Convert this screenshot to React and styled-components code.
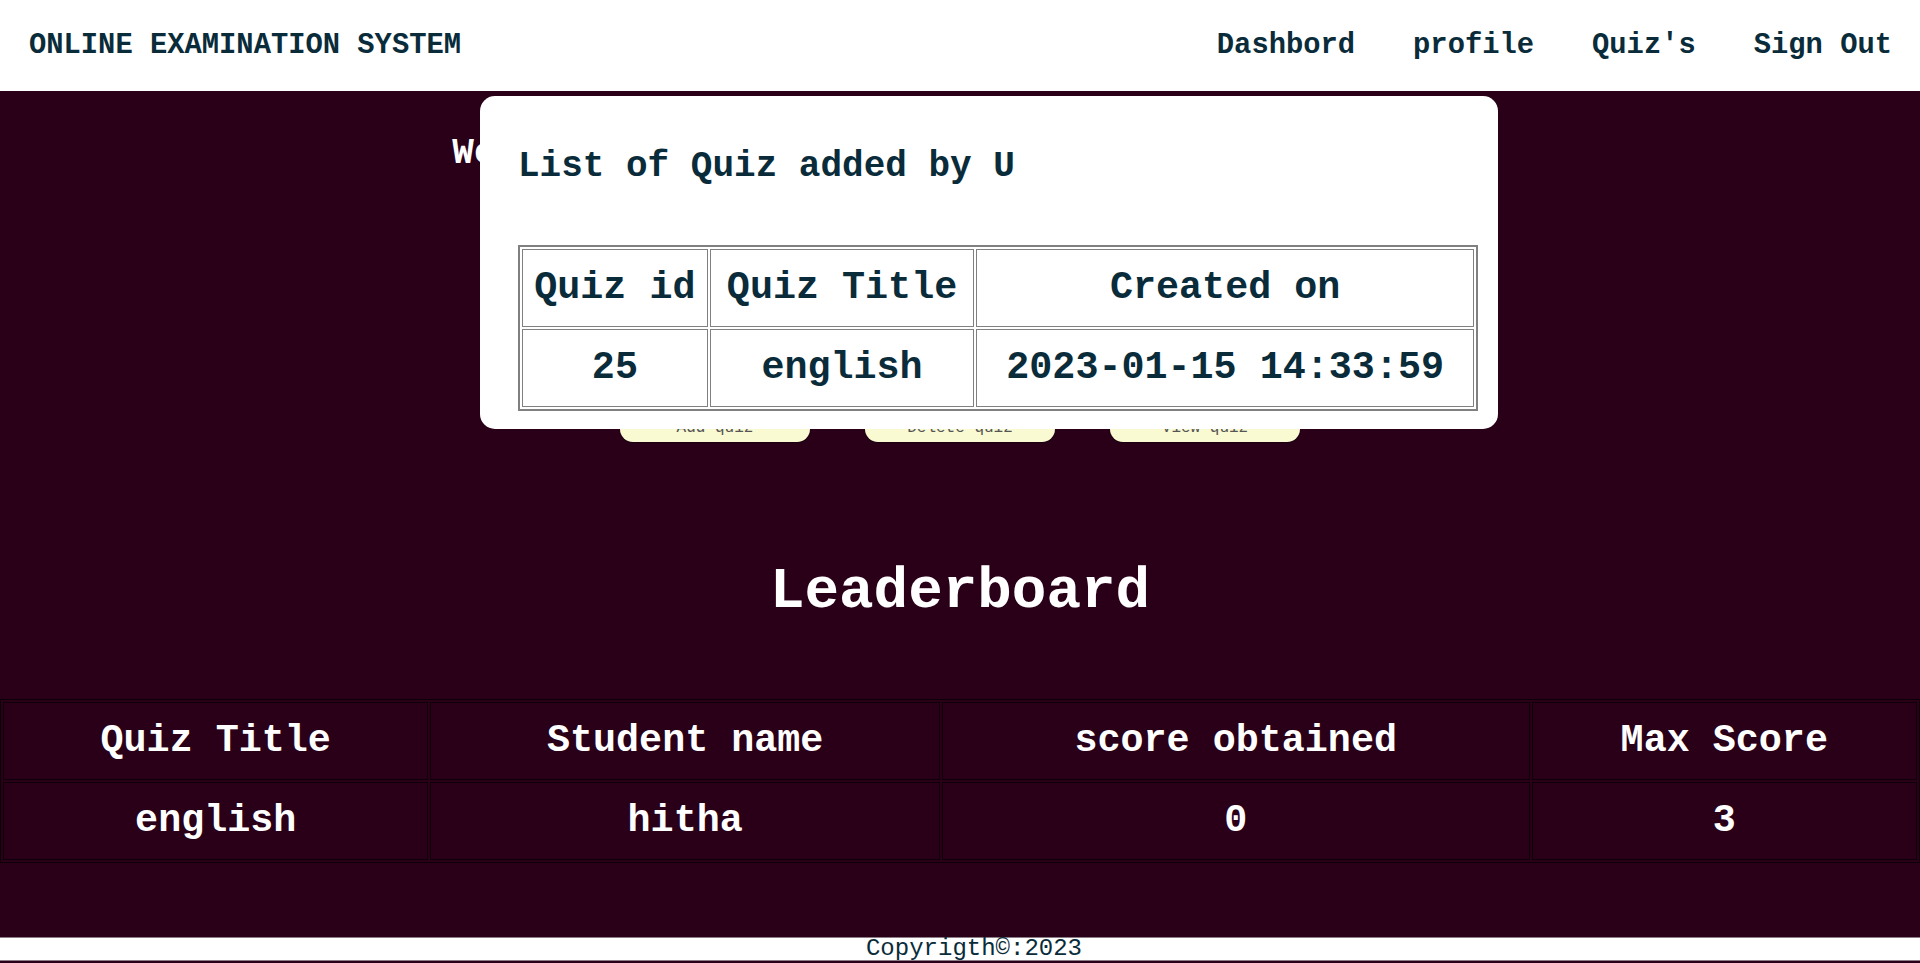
import React from "react";
import styled, { createGlobalStyle } from "styled-components";

const ink = "#0a2c3a";
const wine = "#2a0019";
const mono = `"Courier New", "Nimbus Mono PS", "Liberation Mono", monospace`;

const GlobalStyle = createGlobalStyle`
  body {
    margin: 0;
    background: ${wine};
    font-family: ${mono};
  }
`;

const Header = styled.header`
  height: 91px;
  background: #fff;
  display: flex;
  align-items: center;
  justify-content: space-between;
  padding: 0 28px 0 29px;
  box-sizing: border-box;
`;

const Brand = styled.div`
  font-size: 28.8px;
  font-weight: bold;
  color: ${ink};
`;

const Nav = styled.nav`
  display: flex;
  gap: 58px;
`;

const NavLink = styled.a`
  font-size: 28.8px;
  font-weight: bold;
  color: ${ink};
  text-decoration: none;
`;

const Main = styled.main`
  padding-top: 42px;
  display: flex;
  flex-direction: column;
  align-items: center;
`;

const Welcome = styled.h2`
  margin: 0;
  font-size: 36px;
  font-weight: bold;
  color: #fff;
  text-align: center;
`;

const Actions = styled.div`
  display: flex;
  gap: 55px;
  margin-top: 232px;
`;

const ActionButton = styled.button`
  width: 190px;
  padding: 13px 0 5px;
  border: none;
  border-radius: 13px;
  background: #fafad2;
  box-shadow: 0 1px 2px rgba(0, 0, 0, 0.45);
  font-family: ${mono};
  font-size: 16px;
  line-height: 18px;
  color: #555;
`;

const BoardTitle = styled.h1`
  margin: 117px 0 75px;
  font-size: 57.6px;
  font-weight: bold;
  color: #fff;
`;

const Table = styled.table`
  width: ${(p) => p.$width};
  table-layout: fixed;
  border-collapse: separate;
  border-spacing: 2px;
  border: 1px solid ${(p) => p.$line};
  color: ${(p) => p.$color};
`;

const Cell = styled.td`
  border: 1px solid ${(p) => p.$line};
  padding: 16px 8px;
  font-size: 38.4px;
  font-weight: bold;
  text-align: center;
  white-space: nowrap;
`;

const BoardTable = styled(Table)`
  margin-bottom: 74px;
  align-self: stretch;
`;

const Footer = styled.footer`
  background: #fff;
  border-top: 1px solid #8c7c86;
  border-bottom: 1px solid #8c7c86;
  height: 22px;
  line-height: 22px;
  padding-left: 28px;
  text-align: center;
  font-size: 24px;
  color: ${ink};
`;

const Modal = styled.div`
  position: absolute;
  top: 96px;
  left: 480px;
  width: 1018px;
  height: 333px;
  box-sizing: border-box;
  padding: 20px 20px 20px 38px;
  background: #fff;
  border-radius: 15px;
`;

const ModalTitle = styled.h2`
  margin: 30px 0 58px;
  font-size: 36px;
  font-weight: bold;
  color: ${ink};
`;

const QuizTable = styled(Table)`
  border-width: 2px;
`;

const quizCols = ["19.6%", "27.9%", "52.5%"];
const boardCols = ["22.3%", "26.7%", "30.8%", "20.2%"];

function Row({ cells, line, head }) {
  return (
    <tr>
      {cells.map((c) => (
        <Cell as={head ? "th" : "td"} key={c} $line={line}>
          {c}
        </Cell>
      ))}
    </tr>
  );
}

export default function App() {
  return (
    <>
      <GlobalStyle />
      <Header>
        <Brand>ONLINE EXAMINATION SYSTEM</Brand>
        <Nav>
          <NavLink href="#">Dashbord</NavLink>
          <NavLink href="#">profile</NavLink>
          <NavLink href="#">Quiz's</NavLink>
          <NavLink href="#">Sign Out</NavLink>
        </Nav>
      </Header>
      <Main>
        <Welcome>Welcome Teacher to Online Examination System !!</Welcome>
        <Actions>
          <ActionButton>Add quiz</ActionButton>
          <ActionButton>Delete quiz</ActionButton>
          <ActionButton>View quiz</ActionButton>
        </Actions>
        <BoardTitle>Leaderboard</BoardTitle>
        <BoardTable $width="100%" $line="#0d0008" $color="#fff">
          <colgroup>
            {boardCols.map((w, i) => (
              <col key={i} style={{ width: w }} />
            ))}
          </colgroup>
          <tbody>
            <Row head line="#0d0008" cells={["Quiz Title", "Student name", "score obtained", "Max Score"]} />
            <Row line="#0d0008" cells={["english", "hitha", "0", "3"]} />
          </tbody>
        </BoardTable>
      </Main>
      <Footer>Copyrigth©:2023</Footer>
      <Modal>
        <ModalTitle>List of Quiz added by U</ModalTitle>
        <QuizTable $width="960px" $line="#808080" $color={ink}>
          <colgroup>
            {quizCols.map((w, i) => (
              <col key={i} style={{ width: w }} />
            ))}
          </colgroup>
          <tbody>
            <Row head line="#808080" cells={["Quiz id", "Quiz Title", "Created on"]} />
            <Row line="#808080" cells={["25", "english", "2023-01-15 14:33:59"]} />
          </tbody>
        </QuizTable>
      </Modal>
    </>
  );
}
